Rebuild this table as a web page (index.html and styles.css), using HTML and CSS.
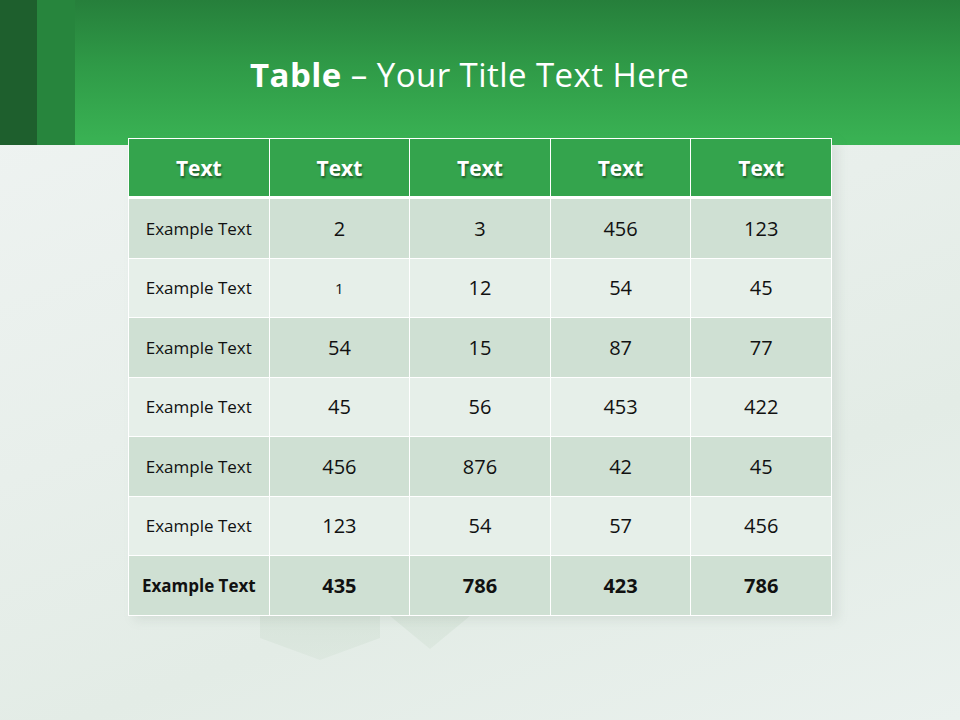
FILE: index.html
```html
<!DOCTYPE html>
<html>
<head>
<meta charset="utf-8">
<link rel="stylesheet" href="styles.css">
</head>
<body>
<div class="slide">
  <header class="band">
    <div class="strip strip-dark"></div>
    <div class="strip strip-mid"></div>
    <h1 class="title"><b>Table</b> – Your Title Text Here</h1>
  </header>
  <div class="table-wrap">
    <div class="shadow-shape shape-a"></div>
    <div class="shadow-shape shape-b"></div>
    <table class="data">
      <thead>
        <tr><th>Text</th><th>Text</th><th>Text</th><th>Text</th><th>Text</th></tr>
      </thead>
      <tbody>
        <tr class="odd"><td class="lbl">Example Text</td><td>2</td><td>3</td><td>456</td><td>123</td></tr>
        <tr class="even"><td class="lbl">Example Text</td><td class="small">1</td><td>12</td><td>54</td><td>45</td></tr>
        <tr class="odd"><td class="lbl">Example Text</td><td>54</td><td>15</td><td>87</td><td>77</td></tr>
        <tr class="even"><td class="lbl">Example Text</td><td>45</td><td>56</td><td>453</td><td>422</td></tr>
        <tr class="odd"><td class="lbl">Example Text</td><td>456</td><td>876</td><td>42</td><td>45</td></tr>
        <tr class="even"><td class="lbl">Example Text</td><td>123</td><td>54</td><td>57</td><td>456</td></tr>
        <tr class="odd total"><td class="lbl">Example Text</td><td>435</td><td>786</td><td>423</td><td>786</td></tr>
      </tbody>
    </table>
  </div>
</div>
</body>
</html>
```
FILE: styles.css
```css
html, body {
  margin: 0;
  padding: 0;
}
body {
  width: 960px;
  height: 720px;
  overflow: hidden;
  font-family: "Open Sans", Lato, sans-serif;
}
.slide {
  width: 960px;
  height: 720px;
  background: linear-gradient(160deg, #f0f4f3 0%, #e8efeb 45%, #e3ece6 70%, #eaf1ee 100%);
}
.band {
  height: 145px;
  display: flex;
  background: linear-gradient(180deg, #267f3b 0%, #2f9a47 45%, #3ab354 100%);
}
.strip {
  height: 145px;
  flex: none;
}
.strip-dark {
  width: 37px;
  background: #1e5f2d;
}
.strip-mid {
  width: 38px;
  background: #27853d;
}
.title {
  margin: 0;
  padding-top: 53px;
  padding-left: 175px;
  font-size: 33px;
  font-weight: 400;
  letter-spacing: 0.45px;
  color: #ffffff;
  line-height: 44px;
  white-space: nowrap;
}
.title b {
  font-weight: 700;
}
.table-wrap {
  position: relative;
  margin-top: -7px;
  margin-left: 128px;
  width: 704px;
}
.shadow-shape {
  position: absolute;
  top: 478px;
  width: 120px;
  height: 110px;
  background: linear-gradient(180deg, rgba(205,221,208,0.5), rgba(225,235,228,0));
}
.shape-a {
  left: 132px;
  clip-path: polygon(0 0, 100% 0, 100% 20%, 50% 40%, 0 20%);
}
.shape-b {
  left: 262px;
  width: 80px;
  clip-path: polygon(0 0, 100% 0, 50% 30%);
}
.data {
  position: relative;
  border-collapse: collapse;
  width: 704px;
  table-layout: fixed;
  box-shadow: 6px 4px 10px rgba(120,140,130,0.15);
}
.data th, .data td {
  border: 1px solid #ffffff;
  text-align: center;
  padding: 0;
}
.data th {
  height: 57px;
  background: #34a44d;
  color: #ffffff;
  font-size: 21px;
  font-weight: 700;
  text-shadow: 1px 2px 2px rgba(0,0,0,0.45);
  border-bottom: 3px solid #ffffff;
}
.data td {
  height: 58.5px;
  font-size: 20px;
  color: #111111;
}
.odd td {
  background: #cfe0d3;
}
.even td {
  background: #e6efe9;
}
.data td.lbl {
  font-size: 17px;
}
.data td.small {
  font-size: 15px;
}
.total td {
  font-weight: 700;
}
```
